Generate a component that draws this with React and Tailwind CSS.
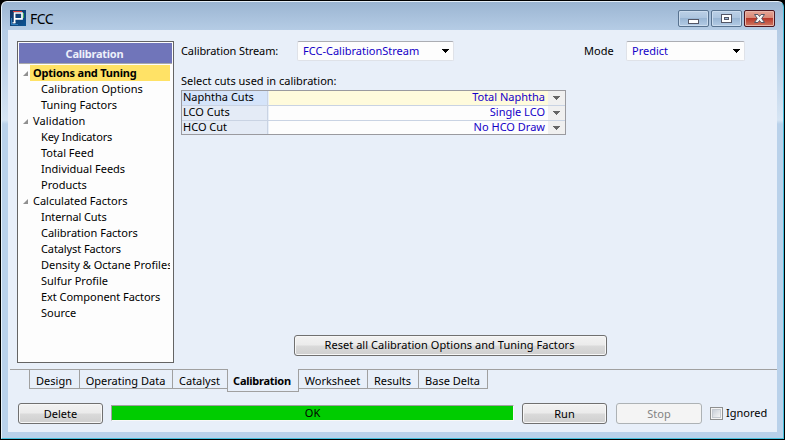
const TREE = [
  { label: "Options and Tuning", root: true, selected: true },
  { label: "Calibration Options", track: "tracking-[0.1px]" },
  { label: "Tuning Factors" },
  { label: "Validation", root: true, track: "tracking-[0.1px]" },
  { label: "Key Indicators", track: "tracking-[-0.15px]" },
  { label: "Total Feed" },
  { label: "Individual Feeds" },
  { label: "Products" },
  { label: "Calculated Factors", root: true },
  { label: "Internal Cuts", track: "tracking-[-0.1px]" },
  { label: "Calibration Factors" },
  { label: "Catalyst Factors", track: "tracking-[-0.1px]" },
  { label: "Density & Octane Profiles", track: "tracking-[0.02px]" },
  { label: "Sulfur Profile" },
  { label: "Ext Component Factors", track: "tracking-[-0.05px]" },
  { label: "Source" },
];

const CUTS = [
  { name: "Naphtha Cuts", value: "Total Naphtha", active: true },
  { name: "LCO Cuts", value: "Single LCO" },
  { name: "HCO Cut", value: "No HCO Draw" },
];

const TABS = [
  { label: "Design", width: "w-[50px]" },
  { label: "Operating Data", width: "w-[93px]" },
  { label: "Catalyst", width: "w-[55px]" },
  { label: "Calibration", width: "w-[72px]", active: true },
  { label: "Worksheet", width: "w-[69px]" },
  { label: "Results", width: "w-[51px]" },
  { label: "Base Delta", width: "w-[69px]" },
];

function Logo() {
  return (
    <svg width="16" height="16" viewBox="0 0 16 16" className="shrink-0">
      <defs>
        <linearGradient id="logo-bg" x1="0" y1="0" x2="1" y2="1">
          <stop offset="0" stopColor="#12305f" />
          <stop offset="1" stopColor="#0c5594" />
        </linearGradient>
      </defs>
      <rect width="16" height="16" fill="url(#logo-bg)" />
      <path d="M1.5 8V14.5H8" fill="none" stroke="#2f7fc0" />
      <path d="M3 1.5H12" stroke="#d8403c" />
      <path d="M13.5 3V8" stroke="#42ad58" />
      <path d="M4.6 13V3H12V8.8H5.4" fill="none" stroke="#fff" strokeWidth="1.7" />
      <path d="M2.5 12.8H5.4" stroke="#fff" strokeWidth="1.2" />
    </svg>
  );
}

function CaptionButton({ kind }) {
  const close = kind === "close";
  return (
    <button
      className={`flex h-[17px] w-[31px] items-center justify-center rounded-[2px] border pt-px ${
        close
          ? "border-[#4c1620] bg-[linear-gradient(#e5a596_0%,#d98876_46%,#b8382a_50%,#d07863_100%)] shadow-[inset_0_0_0_1px_#e8b5a9]"
          : "border-[#58728f] bg-[linear-gradient(#bcd0e6_0%,#adc5df_46%,#9ab6d4_50%,#b3cbe5_100%)] shadow-[inset_0_0_0_1px_#cbdcee]"
      }`}
    >
      <svg width="13" height="11" viewBox="0 0 13 11" shapeRendering={close ? "auto" : "crispEdges"}>
        {kind === "min" && <rect x="1.5" y="5.5" width="10" height="4" rx="0.5" fill="#fff" stroke="#535666" />}
        {kind === "max" && (
          <g stroke="#535666">
            <rect x="1.5" y="0.5" width="10" height="8" fill="#fff" />
            <rect x="4.5" y="3.5" width="4" height="2" fill="#9bb7d5" />
          </g>
        )}
        {close && (
          <path
            d="M1.5 0.5H5L6.5 2.5L8 0.5H11.5L8.7 4.5L11.5 8.5H8L6.5 6.5L5 8.5H1.5L4.3 4.5Z"
            fill="#f6f6f6"
            stroke="#535666"
          />
        )}
      </svg>
    </button>
  );
}

function DownArrow({ small }) {
  return (
    <svg width="7" height="4" viewBox="0 0 7 4" shapeRendering="crispEdges">
      <path d="M0 0H7V1H6V2H5V3H4V4H3V3H2V2H1V1H0Z" fill={small ? "#666" : "#000"} />
    </svg>
  );
}

function Combo({ value, className }) {
  return (
    <div
      className={`flex h-[20px] items-center justify-between rounded-[2px] border border-[#dfe2e8] border-t-[#abadb3] bg-[#fdfdfd] pl-[5px] pr-[4px] text-[#1400c8] ${className}`}
    >
      <span>{value}</span>
      <DownArrow />
    </div>
  );
}

function PushButton({ children, className, disabled }) {
  return (
    <button
      className={`flex h-[21px] shrink-0 items-center justify-center rounded-[3px] border ${
        disabled
          ? "border-[#adb2b5] bg-[#f4f4f4] text-[#838383]"
          : "border-[#707070] bg-[linear-gradient(#f2f2f2_0%,#ebebeb_48%,#dadada_52%,#cfcfcf_100%)] text-black shadow-[inset_0_0_0_1px_#f7f7f7]"
      } ${className}`}
    >
      {children}
    </button>
  );
}

export default function App() {
  return (
    <div className="h-[440px] w-[785px] overflow-hidden bg-black p-px font-['Noto_Sans','Open_Sans',sans-serif] text-[11px] leading-[16px] text-black">
      <div className="flex h-[438px] flex-col rounded-t-[6px] border border-l-[#e8f3fb] border-t-[#e4eef7] border-r-[#45bfdc] border-b-[#45bfdc] bg-[linear-gradient(#9bb5d2_0px,#b5cce5_28px,#bdd1e8_60px,#d6e5f4_118px,#b9d1ea_122px,#b9d1ea_100%)] px-[6px] pb-[6px]">
        <header className="flex h-[28px] shrink-0 items-start justify-between pl-[2px] pr-[2px] pt-[8px]">
          <div className="flex items-center gap-[4px]">
            <Logo />
            <span className="pt-px text-[14px] leading-[15px] tracking-[-0.5px]">FCC</span>
          </div>
          <div className="flex gap-[2px]">
            <CaptionButton kind="min" />
            <CaptionButton kind="max" />
            <CaptionButton kind="close" />
          </div>
        </header>

        <main className="flex min-h-0 flex-1 flex-col bg-[#e8eff9]">
          <div className="flex h-[339px] shrink-0 pl-[9px] pt-[11px]">
            <aside className="h-[322px] w-[157px] shrink-0 overflow-hidden border border-[#646464] bg-[#fdfdfd] p-px">
              <h2 className="flex h-[21px] items-center justify-center border-b border-[#a9a9a9] bg-[#7075ba] pr-[2px] pt-[2px] font-bold tracking-[-0.25px] text-[#edf0fa]">
                Calibration
              </h2>
              <ul className="mr-[2px] overflow-hidden pt-px">
                {TREE.map((n) => (
                  <li key={n.label} className="flex h-[16px] items-center whitespace-nowrap">
                    {n.root ? (
                      <span className="flex w-[11px] shrink-0 pl-[4px]">
                        <svg width="5" height="5" viewBox="0 0 5 5">
                          <path d="M5 0V5H0Z" fill="#909090" />
                        </svg>
                      </span>
                    ) : (
                      <span className="w-[19px] shrink-0" />
                    )}
                    <span
                      className={`flex-1 pl-[3px] ${
                        n.selected ? "bg-[#ffe266] font-bold tracking-[-0.2px]" : n.track || ""
                      }`}
                    >
                      {n.label}
                    </span>
                  </li>
                ))}
              </ul>
            </aside>

            <section className="flex flex-1 flex-col pl-[7px]">
              <div className="flex h-[20px] items-center">
                <span className="w-[116px] tracking-[-0.1px]">Calibration Stream:</span>
                <Combo value="FCC-CalibrationStream" className="w-[157px]" />
                <span className="ml-[130px] w-[42px]">Mode</span>
                <Combo value="Predict" className="w-[119px]" />
              </div>
              <p className="mt-[12px] h-[17px]">Select cuts used in calibration:</p>
              <div className="h-[45px] w-[385px] border border-[#9a9a9f]">
                {CUTS.map((c) => (
                  <div
                    key={c.name}
                    className="flex h-[15px] items-center border-b border-[#c9d3e3] leading-[12px] last:h-[13px] last:border-b-0"
                  >
                    <span
                      className={`h-full w-[86px] border-r border-[#c9d3e3] pl-px ${
                        c.active ? "bg-[#d5e4fa]" : "bg-[#e4ebf6]"
                      }`}
                    >
                      {c.name}
                    </span>
                    <span
                      className={`ml-px h-full flex-1 pr-[3px] text-right text-[#1400c8] ${
                        c.active ? "bg-[#fffbdc]" : "bg-[#fdfdfd]"
                      }`}
                    >
                      {c.value}
                    </span>
                    <span className="flex h-full w-[17px] items-center justify-center bg-[#f0f0f0]">
                      <DownArrow small />
                    </span>
                  </div>
                ))}
              </div>
              <PushButton className="ml-[113px] mt-[200px] w-[313px] pb-[2px] pr-[2px] tracking-[0.05px]">
                Reset all Calibration Options and Tuning Factors
              </PushButton>
            </section>
          </div>

          <nav className="flex h-[34px] shrink-0 items-start pl-[2px]">
            <div className="w-[19px] border-t border-[#a0a0a0]" />
            {TABS.map((t) => (
              <div
                key={t.label}
                className={`flex items-center justify-center whitespace-nowrap border-[#a0a0a0] ${t.width} ${
                  t.active
                    ? "-mr-px h-[23px] border-x border-b pr-[2px] pt-[2px] font-bold tracking-[-0.25px]"
                    : "h-[20px] border-b border-l border-t pr-px pt-[4px]"
                }`}
              >
                {t.label}
              </div>
            ))}
            <div className="h-[20px] flex-1 border-t border-[#a0a0a0]">
              <div className="h-[19px] border-l border-[#a0a0a0]" />
            </div>
          </nav>

          <footer className="flex items-start pl-[10px]">
            <PushButton className="w-[85px]">Delete</PushButton>
            <div className="ml-[8px] mt-[2px] flex h-[16px] w-[403px] items-center justify-center border border-[#f8f8f8] border-l-[#a0a0a0] border-t-[#a0a0a0] bg-[#00cc00]">
              OK
            </div>
            <PushButton className="ml-[8px] w-[85px]">Run</PushButton>
            <PushButton disabled className="ml-[9px] w-[86px]">
              Stop
            </PushButton>
            <label className="ml-[8px] mt-[2px] flex items-center gap-[3px]">
              <span className="h-[13px] w-[13px] border border-[#8e8f8f] bg-[#f4f4f4] p-px">
                <span className="block h-[9px] w-[9px] border border-[#c4c9d0] bg-[linear-gradient(135deg,#c9cfd8,#f4f4f4)]" />
              </span>
              Ignored
            </label>
          </footer>
        </main>
      </div>
    </div>
  );
}
